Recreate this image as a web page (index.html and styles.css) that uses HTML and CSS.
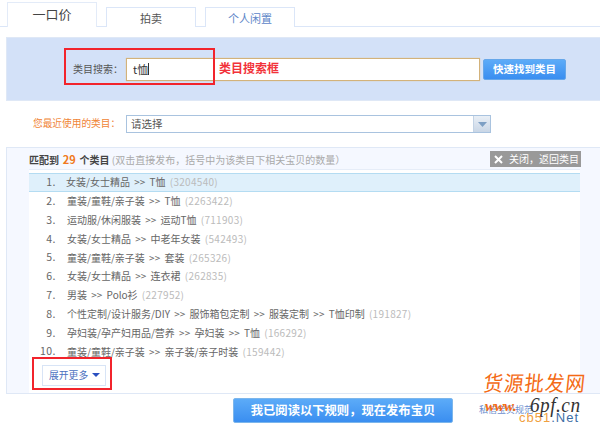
FILE: index.html
```html
<!DOCTYPE html>
<html lang="zh">
<head>
<meta charset="utf-8">
<title>一口价</title>
<link rel="stylesheet" href="styles.css">
</head>
<body>
<div class="page">
  <nav class="tabs">
    <div class="tab active">一口价</div>
    <div class="tab">拍卖</div>
    <div class="tab blue">个人闲置</div>
  </nav>
  <section class="search">
    <span class="search-label">类目搜索：</span>
    <div class="search-input"><span>t恤</span><i class="caret"></i></div>
    <button class="quick">快速找到类目</button>
    <div class="mark mark-search"></div>
    <span class="mark-text">类目搜索框</span>
  </section>
  <section class="recent">
    <span class="recent-label">您最近使用的类目：</span>
    <div class="select"><span>请选择</span>
      <span class="select-arrow"><svg width="9" height="5" viewBox="0 0 9 5"><path d="M0 0h9L4.500 5z" fill="#7d9fc4"/></svg></span>
    </div>
  </section>
  <section class="results">
    <header class="results-head">
      <div class="title"><b>匹配到 <em>29</em> 个类目</b> <span>(双击直接发布，括号中为该类目下相关宝贝的数量）</span></div>
      <div class="close"><svg width="9" height="9" viewBox="0 0 9 9"><path d="M1 1l7 7M8 1l-7 7" stroke="#fff" stroke-width="2"/></svg><span>关闭，返回类目</span></div>
    </header>
    <div class="list">
      <ol class="rows">
        <li class="row on"><span class="n">1.</span><span>女装/女士精品 &gt;&gt; T恤 <u>(3204540)</u></span></li>
        <li class="row"><span class="n">2.</span><span>童装/童鞋/亲子装 &gt;&gt; T恤 <u>(2263422)</u></span></li>
        <li class="row"><span class="n">3.</span><span>运动服/休闲服装 &gt;&gt; 运动T恤 <u>(711903)</u></span></li>
        <li class="row"><span class="n">4.</span><span>女装/女士精品 &gt;&gt; 中老年女装 <u>(542493)</u></span></li>
        <li class="row"><span class="n">5.</span><span>童装/童鞋/亲子装 &gt;&gt; 套装 <u>(265326)</u></span></li>
        <li class="row"><span class="n">6.</span><span>女装/女士精品 &gt;&gt; 连衣裙 <u>(262835)</u></span></li>
        <li class="row"><span class="n">7.</span><span>男装 &gt;&gt; Polo衫 <u>(227952)</u></span></li>
        <li class="row"><span class="n">8.</span><span>个性定制/设计服务/DIY &gt;&gt; 服饰箱包定制 &gt;&gt; 服装定制 &gt;&gt; T恤印制 <u>(191827)</u></span></li>
        <li class="row"><span class="n">9.</span><span>孕妇装/孕产妇用品/营养 &gt;&gt; 孕妇装 &gt;&gt; T恤 <u>(166292)</u></span></li>
        <li class="row"><span class="n">10.</span><span>童装/童鞋/亲子装 &gt;&gt; 亲子装/亲子时装 <u>(159442)</u></span></li>
      </ol>
      <div class="more">展开更多<svg width="8" height="4" viewBox="0 0 8 4"><path d="M0 0h8L4 4z" fill="#2a4fc0"/></svg></div>
      <div class="mark mark-more"></div>
    </div>
  </section>
  <footer class="foot">
    <button class="publish">我已阅读以下规则，现在发布宝贝</button>
    <span class="foot-link">私信宝贝规范</span>
  </footer>
  <div class="wm wm-top">货源批发网</div>
  <div class="wm wm-www">www.</div>
  <div class="wm-pf">6pf.cn</div>
  <div class="wm-net"><span class="cb">cb51</span>.Net</div>
</div>
</body>
</html>
```
FILE: styles.css
```css
* { box-sizing: border-box; }
html, body { margin: 0; padding: 0; background: #fff; }
body { font: 11px/1 "Noto Sans CJK SC", "Liberation Sans", sans-serif; color: #555; }
.page { position: relative; width: 600px; height: 428px; overflow: hidden; }

.tabs { display: flex; align-items: flex-end; gap: 9px; height: 27px; padding: 2px 0 0 7px; border-bottom: 1px solid #dbe6f8; }
.tab { width: 90px; height: 20px; margin-bottom: -1px; border: 1px solid #dbe6f8; border-bottom: 0; background: #fff; text-align: center; font-size: 11px; line-height: 21px; color: #555; }
.tab.active { height: 25px; border-color: #e3ebf8; font-size: 13px; line-height: 22px; color: #444; background: #fff; }
.tab.blue { color: #5d86c8; }

.search { position: relative; display: flex; align-items: center; height: 64px; margin: 10px 0 0 6px; padding: 0 0 0 66px; background: #d3e1f8; border: 1px solid #dfe8f6; border-right: 0; }
.search-label { width: 53px; font-size: 10px; color: #555; }
.search-input { display: flex; align-items: center; width: 354px; height: 23px; padding-left: 6px; background: #fff; border: 1px solid #d3b27a; box-shadow: 0 0 1px #e0c48f; font-size: 11px; color: #333; }
.caret { width: 1px; height: 12px; background: #333; }
.quick { width: 83px; height: 21px; margin-left: 3px; padding: 0; border: 1px solid #66a7ea; border-radius: 2px; background: linear-gradient(#5cabf8, #3a8ef0); color: #fff; font: bold 10.500px/1 "Noto Sans CJK SC", sans-serif; }
.mark { position: absolute; border: 2px solid #f2242c; }
.mark-search { left: 57px; top: 10px; width: 151px; height: 37px; }
.mark-text { position: absolute; left: 212px; top: 23px; font-size: 12px; font-weight: 700; color: #f2323a; background: #fff; padding-right: 2px; line-height: 14px; }

.recent { display: flex; align-items: center; height: 18px; margin-top: 14px; padding-left: 33px; }
.recent-label { width: 93px; font-size: 9.700px; color: #f08436; white-space: nowrap; }
.select { display: flex; align-items: center; justify-content: space-between; width: 365px; height: 18px; padding-left: 4px; border: 1px solid #a9c3df; background: #fff; font-size: 10.500px; color: #555; }
.select-arrow { display: flex; align-items: center; justify-content: center; width: 17px; height: 16px; background: linear-gradient(#e9eff6, #c9d6e6); border-left: 1px solid #c3d3e5; }

.results { height: 247px; margin: 14px 0 0 6px; padding: 0 20px 0 22px; background: #f5f8ff; border: 1px solid #dfe8f6; border-right: 0; }
.results-head { display: flex; justify-content: space-between; height: 22px; padding-top: 3px; border-bottom: 1px solid #e6edf8; }
.title { font-size: 10px; line-height: 16px; color: #aaa; white-space: nowrap; }
.title b { color: #444; font-weight: 700; word-spacing: 1.500px; }
.title em { font-style: normal; color: #f07820; font-size: 11px; }
.close { display: flex; align-items: center; gap: 6px; width: 91px; height: 16px; margin-right: -1px; padding-left: 4px; background: #999; color: #fff; font-size: 10px; }
.list { position: relative; height: 223px; background: #fff; padding-top: 3px; }
.rows { margin: 0; padding: 0; list-style: none; }
.row { display: flex; align-items: center; height: 18.800px; font-size: 10px; color: #666; white-space: nowrap; word-spacing: 2px; }
.row.on { background: #dff0fb; border-top: 1px solid #b4dcf2; border-bottom: 1px solid #b4dcf2; }
.n { width: 37px; padding-right: 10px; text-align: right; color: #666; font-size: 10.500px; letter-spacing: .500px; }
.row:nth-child(n+2) span:last-child { margin-left: 1px; }
.row u { text-decoration: none; color: #bbb; letter-spacing: .300px; }
.more { display: flex; align-items: center; gap: 4px; width: 64px; height: 21px; margin: 4px 0 0 13px; padding-left: 6px; border: 1px solid #d8e4f6; color: #4a6fc0; font-size: 9.800px; }
.mark-more { left: 3px; top: 187px; width: 80px; height: 33px; }

.foot { position: relative; display: flex; height: 35px; padding: 4px 0 0 233px; }
.publish { width: 220px; height: 25px; padding: 0; border: 1px solid #7cb6ec; border-radius: 2px; background: linear-gradient(#5cabf8, #3a8ef0); color: #fff; font: bold 12.300px/1 "Noto Sans CJK SC", sans-serif; }
.foot-link { position: absolute; left: 479px; top: 11px; font-size: 9px; color: #6c8fcf; }

.wm { position: absolute; font-weight: 400; color: #f46a14; white-space: nowrap; }
.wm-top { left: 485px; top: 370px; font-size: 21px; line-height: 24px; letter-spacing: 1px; transform: skewX(-6deg) scaleX(.93); transform-origin: 0 0; }
.wm-www { left: 485px; top: 398px; font: italic 700 15px/16px "Liberation Serif", serif; letter-spacing: -.500px; }
.wm-pf { position: absolute; left: 530px; top: 394px; font: italic 21px/22px "Liberation Serif", serif; color: #333; letter-spacing: .500px; transform: scaleX(.92); transform-origin: 0 0; }
.wm-net { position: absolute; left: 519px; top: 411px; font: 13px/14px "Liberation Sans", sans-serif; color: #3d6ea5; letter-spacing: 1px; }
.cb { color: #f0a040; }
```
